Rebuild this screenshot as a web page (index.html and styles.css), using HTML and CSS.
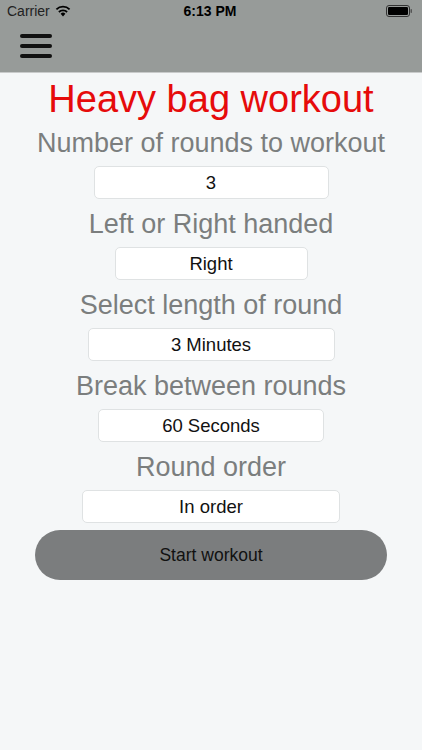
FILE: index.html
```html
<!DOCTYPE html>
<html lang="en">
<head>
    <meta charset="UTF-8">
    <meta name="viewport" content="width=device-width, initial-scale=1.0">
    <title>Heavy bag workout</title>
    <link rel="stylesheet" href="styles.css">
</head>
<body>
    <!-- Top bar: status line and menu button -->
    <header class="topbar">
        <div class="status">
            <div class="status-left">
                <span>Carrier</span>
                <svg class="wifi" width="16" height="12" viewBox="0 0 16 12">
                    <path d="M8 11.5 L5.6 8.8 A3.4 3.4 0 0 1 10.4 8.8 Z" fill="#000"/>
                    <path d="M3.9 7 A5.8 5.8 0 0 1 12.1 7" stroke="#000" stroke-width="1.8" fill="none"/>
                    <path d="M1.4 4.4 A9.4 9.4 0 0 1 14.6 4.4" stroke="#000" stroke-width="1.8" fill="none"/>
                </svg>
            </div>
            <div class="status-time">6:13 PM</div>
            <div class="status-right">
                <svg width="27" height="12" viewBox="0 0 27 12">
                    <rect x="0.5" y="0.5" width="23" height="11" rx="2.5" fill="none" stroke="#333" stroke-width="1"/>
                    <rect x="2" y="2" width="20" height="8" rx="1.2" fill="#000"/>
                    <rect x="24.5" y="4" width="1.5" height="4" rx="0.7" fill="#555"/>
                </svg>
            </div>
        </div>
        <div class="navbar">
            <button class="menu-btn" type="button">
                <span></span><span></span><span></span>
            </button>
        </div>
    </header>

    <!-- Workout settings -->
    <main class="content">
        <h1 class="title">Heavy bag workout</h1>

        <label class="field-label">Number of rounds to workout</label>
        <div class="field w-rounds">3</div>

        <label class="field-label">Left or Right handed</label>
        <div class="field w-hand">Right</div>

        <label class="field-label">Select length of round</label>
        <div class="field w-length">3 Minutes</div>

        <label class="field-label">Break between rounds</label>
        <div class="field w-break">60 Seconds</div>

        <label class="field-label">Round order</label>
        <div class="field w-order">In order</div>

        <button class="start-btn" type="button">Start workout</button>
    </main>
</body>
</html>
```

FILE: styles.css
```css
/* Heavy bag workout screen */
html, body {
    margin: 0;
    padding: 0;
}
body {
    width: 422px;
    height: 750px;
    background-color: #f5f7f8;
    font-family: "Liberation Sans", Arial, sans-serif;
    overflow: hidden;
}

.topbar {
    background-color: #979b99;
    height: 72px;
    border-bottom: 1px solid #c9cbcb;
}
.status {
    height: 22px;
    display: flex;
    align-items: center;
    justify-content: space-between;
    padding: 0 6px 0 7px;
    font-size: 14px;
    color: #000;
}
.status-left {
    display: flex;
    align-items: center;
    gap: 5px;
    width: 120px;
    color: #222;
}
.status-time {
    font-weight: bold;
    font-size: 14px;
}
.status-right {
    width: 120px;
    display: flex;
    justify-content: flex-end;
    padding-right: 3px;
}
.navbar {
    height: 50px;
    display: flex;
    align-items: center;
    padding-left: 20px;
}
.menu-btn {
    display: flex;
    flex-direction: column;
    gap: 6px;
    background: none;
    border: none;
    padding: 0;
    margin-top: -2px;
}
.menu-btn span {
    display: block;
    width: 32px;
    height: 4px;
    border-radius: 2px;
    background-color: #111;
}

.content {
    display: flex;
    flex-direction: column;
    align-items: center;
}
.title {
    margin: 4px 0 0;
    font-size: 38px;
    font-weight: normal;
    color: #e60b0b;
    line-height: 44px;
}
.field-label {
    font-size: 27px;
    color: #7b7e7e;
    line-height: 32px;
    margin-top: 9px;
    margin-bottom: 7px;
}
.field-label:first-of-type {
    margin-top: 6px;
}
.field {
    box-sizing: border-box;
    height: 33px;
    border: 1px solid #dfe2e3;
    border-radius: 5px;
    background-color: #fff;
    font-size: 18.5px;
    color: #111;
    display: flex;
    align-items: center;
    justify-content: center;
}
.w-rounds { width: 235px; }
.w-hand { width: 193px; }
.w-length { width: 247px; }
.w-break { width: 226px; }
.w-order { width: 258px; }

.start-btn {
    margin-top: 7px;
    width: 352px;
    height: 50px;
    border: none;
    border-radius: 25px;
    background-color: #7b7d7e;
    color: #111;
    font-family: "Liberation Sans", Arial, sans-serif;
    font-size: 17.5px;
}
```
